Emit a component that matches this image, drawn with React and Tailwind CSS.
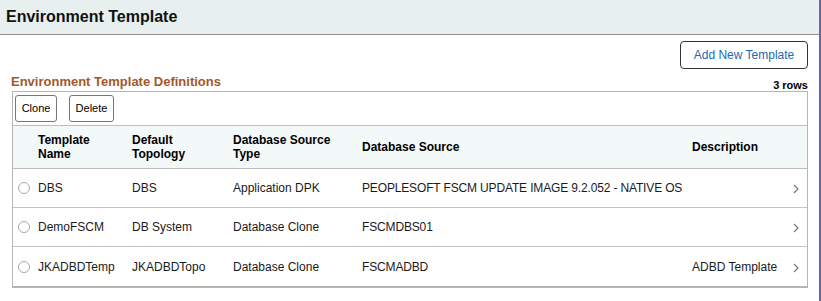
import React from "react";

const rows = [
  { name: "DBS", topo: "DBS", type: "Application DPK", src: "PEOPLESOFT FSCM UPDATE IMAGE 9.2.052 - NATIVE OS", desc: "" },
  { name: "DemoFSCM", topo: "DB System", type: "Database Clone", src: "FSCMDBS01", desc: "" },
  { name: "JKADBDTemp", topo: "JKADBDTopo", type: "Database Clone", src: "FSCMADBD", desc: "ADBD Template" },
];

const cols = "grid grid-cols-[25px_94px_101px_129px_330px_92px_24px]";

function Chevron() {
  return (
    <svg width="6" height="10" viewBox="0 0 6 10" className="block">
      <path d="M1 1 L5 5 L1 9" fill="none" stroke="#7a7a7a" strokeWidth="1.2" />
    </svg>
  );
}

export default function App() {
  return (
    <div className="w-[821px] h-[301px] bg-white border-r-2 border-[#6b63a6] overflow-hidden font-['Liberation_Sans',Arial,sans-serif] text-black">
      <div className="h-[35px] bg-[#e7efef] border-b border-[#8e8e8e] flex items-center px-[6px]">
        <h1 className="text-[16px] font-bold leading-none text-[#111]">Environment Template</h1>
      </div>
      <div className="pl-[12px] pr-[11px]">
        <div className="flex justify-end pt-[6px]">
          <button className="w-[128px] h-[28px] border border-[#333] rounded-[4px] bg-white text-[12px] text-[#2369b3]">
            Add New Template
          </button>
        </div>
        <div className="flex items-end justify-between mt-[4px] h-[16px]">
          <div className="text-[13px] font-bold text-[#a0592d] leading-none -ml-[1px] mb-[1px]">Environment Template Definitions</div>
          <div className="text-[11px] font-bold leading-none mb-[-2px]">3 rows</div>
        </div>
        <div className="mt-[2px] border border-[#b8b4b0] border-b-2">
          <div className="h-[34px] flex items-center gap-[12px] px-[2px] border-b border-[#bdbdbd]">
            <button className="w-[42px] h-[27px] border border-[#777] rounded-[3px] bg-white text-[11px]">Clone</button>
            <button className="w-[45px] h-[27px] border border-[#777] rounded-[3px] bg-white text-[11px]">Delete</button>
          </div>
          <div className={`${cols} h-[43px] items-center bg-[#f3f8f9] border-b border-[#bdbdbd] text-[12px] font-bold leading-[14px]`}>
            <div />
            <div>Template<br />Name</div>
            <div>Default<br />Topology</div>
            <div>Database Source<br />Type</div>
            <div>Database Source</div>
            <div>Description</div>
            <div />
          </div>
          {rows.map((r, i) => (
            <div
              key={r.name}
              className={`${cols} h-[39px] items-center text-[12px] text-[#1a1a1a] ${i < rows.length - 1 ? "border-b border-[#c4c4c4]" : ""}`}
            >
              <div className="pl-[5px]">
                <div className="w-[12px] h-[12px] rounded-full border border-[#a8a8a8] bg-white" />
              </div>
              <div>{r.name}</div>
              <div>{r.topo}</div>
              <div>{r.type}</div>
              <div className="whitespace-nowrap tracking-[-0.15px]">{r.src}</div>
              <div className="whitespace-nowrap">{r.desc}</div>
              <div className="flex justify-center pt-[2px]">
                <Chevron />
              </div>
            </div>
          ))}
        </div>
      </div>
    </div>
  );
}
